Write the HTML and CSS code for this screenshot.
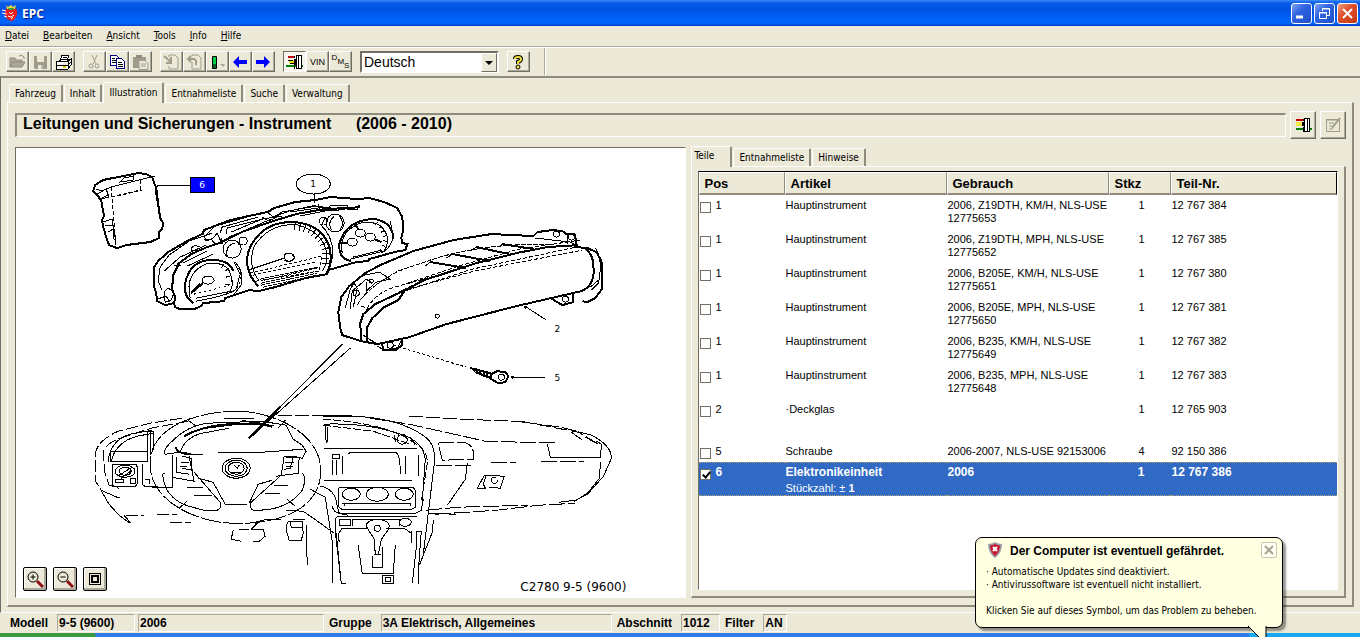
FILE: index.html
```html
<!DOCTYPE html>
<html lang="de">
<head>
    <meta charset="UTF-8">
    <meta name="viewport" content="width=device-width, initial-scale=1.0">
    <title>EPC</title>
    <link rel="stylesheet" href="styles.css">
</head>
<body>
    <header class="titlebar">
        <svg class="app-icon" width="17" height="18" viewBox="0 0 17 18">
            <path d="M3 6l3-2h6l3 2v5l-3 5-3 1-4-2-2-4z" fill="#e81c1c"/>
            <path d="M4 1l2 2 3-2 2 2 3-2-1 4H5z" fill="#e8d840"/>
            <path d="M6 4h6l-1 2H7z" fill="#30a030"/>
            <path d="M0 6l4 1M0 9l5 1M2 12l3 1M7 8l2 2 2-2M6 12l3 1 3-2M9 15l2-2" stroke="#fff" fill="none"/>
        </svg>
        <h1 class="app-name">EPC</h1>
        <div class="window-buttons">
            <button class="win-btn" aria-label="Minimieren"><svg width="19" height="19"><path d="M4 13h7" stroke="#fff" stroke-width="3"/></svg></button>
            <button class="win-btn" aria-label="Wiederherstellen"><svg width="19" height="19" fill="none" stroke="#fff"><path d="M7.500 7V4.500h7v7H12M7 5h8M4.500 8.500h7v6h-7zM4 9h8"/></svg></button>
            <button class="win-btn win-close" aria-label="Schließen"><svg width="19" height="19"><path d="M5 5l9 9M14 5l-9 9" stroke="#fff" stroke-width="2"/></svg></button>
        </div>
    </header>

    <nav class="menubar">
        <a href="#"><u>D</u>atei</a>
        <a href="#"><u>B</u>earbeiten</a>
        <a href="#"><u>A</u>nsicht</a>
        <a href="#"><u>T</u>ools</a>
        <a href="#"><u>I</u>nfo</a>
        <a href="#"><u>H</u>ilfe</a>
    </nav>

    <div class="toolbar">
        <div class="tool-group">
            <button class="tool" aria-label="Öffnen" disabled><svg width="19" height="18"><path d="M2 14V5h5l1 2h6v3M2 14l3-5h12l-3 5z" fill="#aca899" stroke="#8f8b7d"/><path d="M11 3q3-2 5 1v2" fill="none" stroke="#8f8b7d"/></svg></button>
            <button class="tool" aria-label="Speichern" disabled><svg width="19" height="18"><path d="M3 3h13v13H4l-1-1z" fill="#a09c8c"/><path d="M6 3h7v6H6zM7 12h5v4H7z" fill="#ece9d8"/><path d="M11 12v4" stroke="#8f8b7d"/></svg></button>
            <button class="tool" aria-label="Drucken"><svg width="19" height="18" shape-rendering="crispEdges"><path d="M6 8l2-6h7l-2 6M2 8h12l3-2v6l-3 4H2zM2 12h12l3-3M5 8l3-2h7M14 8v8" fill="#fff" stroke="#000"/><path d="M9 4h4M8 6h4" stroke="#000"/><path d="M9 14h3" stroke="#d8c800" stroke-width="2"/></svg></button>
        </div>
        <div class="tool-group">
            <button class="tool" aria-label="Ausschneiden" disabled><svg width="19" height="18" fill="none" stroke="#a09c8c"><path d="M7 2l4 9M12 2l-4 9"/><circle cx="6" cy="13" r="2"/><circle cx="12" cy="13" r="2"/></svg></button>
            <button class="tool" aria-label="Kopieren"><svg width="19" height="18" shape-rendering="crispEdges" fill="#fff" stroke="#000080"><path d="M2.500 2.500h6l3 3v7h-9z"/><path d="M8.500 5.500h5l3 3v7h-8z"/><path d="M4 5h3M4 7h4M4 9h4M10 9h4M10 11h5M10 13h5" stroke="#000"/></svg></button>
            <button class="tool" aria-label="Einfügen" disabled><svg width="19" height="18"><path d="M2 4h13v11H2z" fill="#a09c8c"/><path d="M5 2h6v3H5z" fill="#8f8b7d"/><path d="M8 7.500h6l3 3v6H8z" fill="#ece9d8" stroke="#a09c8c"/><path d="M10 11h5M10 13h5" stroke="#a09c8c"/></svg></button>
        </div>
        <div class="tool-group">
            <button class="tool" aria-label="Import" disabled><svg width="19" height="18" fill="none" stroke="#a09c8c"><path d="M7 4V2h6l3 3v11H7v-3"/><path d="M2 3l7 6M9 4v6H4" stroke-width="2"/></svg></button>
            <button class="tool" aria-label="Export" disabled><svg width="19" height="18" fill="none" stroke="#a09c8c"><path d="M7 3V2h6l3 3v11H7V9"/><path d="M3 6h6q3 1 2 6M6 3L3 6l3 3" stroke-width="2"/></svg></button>
            <button class="tool" aria-label="Markierung"><svg width="19" height="18"><path d="M4.500 3.500h4v12h-4z" fill="#00d040" stroke="#000"/><path d="M5 11h3v4H5z" fill="#0a6020"/><path d="M12 11h5l-2 3z" fill="#aca899"/></svg></button>
            <button class="tool" aria-label="Zurück"><svg width="19" height="18"><path d="M2 9l6-6v4h8v4H8v4z" fill="#0000ff"/></svg></button>
            <button class="tool" aria-label="Vorwärts"><svg width="19" height="18"><path d="M16 9l-6-6v4H2v4h8v4z" fill="#0000ff"/></svg></button>
        </div>
        <div class="tool-group">
            <button class="tool pressed" aria-label="Filter"><svg width="19" height="18" shape-rendering="crispEdges"><path d="M3 4h7" stroke="#c00000" stroke-width="2"/><path d="M4 8h6" stroke="#e8e000" stroke-width="3"/><path d="M1 13h17" stroke="#008000" stroke-width="2"/><path d="M3 7h5M5 10h5M9 3v2M9 11v5" stroke="#000"/><path d="M9 6h3v6H9z" /><path d="M11 2.500h5v13h-5z" fill="#fff" stroke="#000"/><path d="M13.500 3v13" stroke="#000"/></svg></button>
            <button class="tool tool-text">VIN</button>
            <button class="tool tool-text"><span class="dms">D<span class="dms-m">M</span><span class="dms-s">S</span></span></button>
        </div>
        <div class="language">
            <select class="language-select" aria-label="Sprache">
                <option>Deutsch</option>
            </select>
            <span class="language-arrow"></span>
        </div>
        <button class="tool" aria-label="Hilfe"><svg width="19" height="18" fill="none"><path d="M6 6q0-2 3-2t3 2q0 2-3 3v2" stroke="#000" stroke-width="4"/><path d="M6 6q0-2 3-2t3 2q0 2-3 3v2" stroke="#f0e040" stroke-width="2"/><circle cx="9" cy="14" r="2" fill="#f0e040" stroke="#000"/></svg></button>
        <span class="toolbar-end"></span>
    </div>

    <main class="workspace">
        <div class="tabs">
            <button class="tab">Fahrzeug</button>
            <button class="tab">Inhalt</button>
            <button class="tab active">Illustration</button>
            <button class="tab">Entnahmeliste</button>
            <button class="tab">Suche</button>
            <button class="tab">Verwaltung</button>
        </div>
        <section class="panel">
            <div class="heading-row">
                <h2 class="heading">Leitungen und Sicherungen - Instrument <span class="years">(2006 - 2010)</span></h2>
                <button class="big-tool" aria-label="Filter"><svg width="19" height="18" shape-rendering="crispEdges"><path d="M2 4h8" stroke="#c00000" stroke-width="2"/><path d="M2 8h8" stroke="#f0e840" stroke-width="4"/><path d="M2 13h16" stroke="#008000" stroke-width="2"/><path d="M8 6h2v4H8z"/><path d="M10.500 2.500h5v13h-5z" fill="#fff" stroke="#000"/><path d="M9 3v2M9 11v5M13.500 3v13" stroke="#000"/></svg></button>
                <button class="big-tool" aria-label="Notiz" disabled><svg width="19" height="18" fill="none" stroke="#a09c8c"><path d="M2.500 3.500h13v12h-13z" /><path d="M2 4h13M5 7h5M5 10h3M5 13h4"/><path d="M8 12l8-10" stroke-width="2"/></svg></button>
            </div>

            <div class="columns">
                <div class="illustration">
                    <svg class="drawing" viewBox="16 148 668 449" fill="none" stroke="#000" shape-rendering="crispEdges">
                        <!-- control unit -->
                        <g>
                            <path class="thick" d="M95 185l8-5 35-7 8 1 6 3 2 6 2 4 4 31 3 5-1 6-3 3v6l-9 4-24 3-9 3-8-3-3-8-3-11-1-6 2-4-3-16-5-6-3-3z"/>
                            <path d="M96 189l6 2 9-4 44-11M100 199l4-2 5-3M103 222l9-3 4 25M105 225l9 1M108 232l5-3 1 11M97 194l9-5 3 8-8 2zM120 182l4-4 9-2v4zM155 190l5 29M158 186l-3 1 5 31"/>
                            <path stroke-dasharray="4 2" d="M111 187l5 59M111 197l29-7 1-11M117 196l25-6"/>
                            <path d="M157 185h33"/>
                        </g>
                        <!-- instrument cluster -->
                        <g>
                            <path class="thick" d="M180 309l-5-2-1-4-9 2-8-4-1-8-2-6v-20l4-6 10-9 19-11 15-7 2-4 26-10 37-8 7-4 21-6 20-2 15-3 27 2 12-1 15 4 13 6 5 9 1 13-2 8 1 5 5 1-2 6-11 2-25 7-1 2-12 1-28 8-1 4-22 4-30 9-17 4-9-1-24 8-1 3-21 2-2 3-7 3z"/>
                            <path class="thick" d="M174 303l1-6-3-8 1-14 6-12 12-9 16-7 12-4 25-12 29-10 23-7 28-5 24-1 12-1"/>
                            <path d="M162 290l-4-9 2-14 9-12 20-14 23-8M164 271l16-14 26-12M207 234l8-8 32-9 24-6M220 233l2-6 36-10M226 234l1-6 36-9M267 212l6 5 16-6 27-6M272 218l10-6 34-6 20 3M318 204l2 7 9-1 1-5h17v4h10l2-4M231 232l31-13 20-3M229 237l42-18M183 263l24-12M187 266l26-12M191 248l4-3 7 3-3 3-8-1zM204 239h7l4 5 7-1-1-5M203 233l3 8 7-3 4-5 4 9M262 217l7 4 8-4"/>
                            <path d="M290 212l34-5 21 3M300 216l30-6 9 1M164 292l4-4 6 4-3 8-6 2zM157 299l9-3 4 6M174 265h7M178 262l-1 7"/>
                            <!-- left dial -->
                            <path class="thick" d="M193 303q-10-7-8-20 5-22 24-23 20-1 24 11"/>
                            <path d="M190 298q-6-26 18-35 18-1 22 10 5 13-1 19M196 301q34-6 40-12l4-15-6-12M235 262q9 9 6 23l-7 9M196 298l36-7" />
                            <path stroke-dasharray="2 3" d="M194 294q34-8 37-10 2-15-11-21M236 263q9 14 0 26"/>
                            <ellipse cx="208" cy="280" rx="6" ry="4"/>
                            <path class="heavy" d="M203 283l-12 10 9-9"/>
                            <path d="M226 277l4-1M225 271l4-3M221 268l3-4M225 284h5"/>
                            <circle cx="232" cy="249" r="9"/><path d="M227 256q-2-11 8-13"/>
                            <circle cx="243" cy="241" r="4"/><path d="M238 245l2-8"/>
                            <!-- center dial -->
                            <path class="thick" d="M258 286q-17-18-8-39 13-26 44-25 27 2 35 24 4 17-3 28"/>
                            <path d="M259 281q-12-16-5-35 16-24 44-21 24 7 28 26 2 12-4 20M320 224q18 18 10 42M251 278q-8-16-1-31"/>
                            <path stroke-width="7" stroke-dasharray="1 4" d="M294 226q26 4 31 23v17"/>
                            <path d="M248 270l36-12v-4l7-1 4 5-6 4-5-2"/>
                            <ellipse cx="289" cy="257" rx="5" ry="4"/>
                            <path stroke-dasharray="3 2" d="M250 273l72-17-3 15-63 10M253 275l63-13"/>
                            <path stroke-dasharray="4 1" d="M261 283l56-12M261 285l56-12M263 287l54-12M264 280l53-12M260 279l58-12"/>
                            <circle cx="335" cy="223" r="9"/><path d="M331 230q-4-8 3-14M339 216q6 6 1 14"/>
                            <circle cx="323" cy="221" r="4"/><path d="M321 225l4-7"/>
                            <!-- right dial -->
                            <path class="thick" d="M351 261q-13-2-12-17 7-25 36-25 18 4 18 20"/>
                            <path d="M342 253q-4-21 18-30 22-4 27 14 1 12-6 16M350 259l34-8q7-4 9-15l-3-15M353 257l29-7"/>
                            <ellipse cx="352" cy="242" rx="5" ry="4"/><ellipse cx="360" cy="233" rx="5" ry="4"/><ellipse cx="370" cy="237" rx="5" ry="4"/>
                            <path class="heavy" d="M348 243h-9M358 229l-4-6M374 239l7 3"/>
                            <path stroke-width="4" stroke-dasharray="1 4" d="M376 223q14 13 5 27"/>
                            <ellipse cx="313" cy="184" rx="17" ry="10"/>
                            <path d="M314 194v9"/>
                        </g>
                        <!-- housing with lens -->
                        <g>
                            <path class="thick" d="M377 344l-16-3-19-6-2-7-2-16 3-15 8-11 16-13 15-8 33-14 40-11 38-6 42 2 4-4 15-2 10 1 4 3 8 0 2 8-1 5 12 1 9 4 5 9 1 12v15l-7 10-8 4-5-1"/>
                            <path class="thick" d="M361 341l-1-18 3-9 12-10 32-15 17-9 52-17 40-10 31-6 31-2"/>
                            <path class="thick" d="M367 342v-15l5-9 12-11 14-7 8-12M377 344l32-7 37-13 70-18 65-15q14-6 12-24 0-13-9-20"/>
                            <path d="M595 248q8 12 3 35l-7 7M590 287l8-7"/>
                            <path stroke-dasharray="4 2" d="M408 283l50-17 61-17 61-9M411 288l63-17 108-21M407 290l65-21 104-22M361 306l6 2q8-14 24-20l43-12 40-12"/>
                            <path stroke-dasharray="5 1" d="M357 305q8-16 41-34l32-11q51-17 124-16M366 310l13-8 47-24"/>
                            <path class="heavy" d="M430 262l36 6M452 254l38 7M476 247l33 7M502 244l32 5"/>
                            <path d="M430 262l-5 4M452 254l-6 4M476 247l-6 4M502 244l-4 3M377 346l7 4 16-3 3-9M383 346v4l13 0 6-12"/>
                            <path class="heavy" d="M382 344l1 6 13-1 6-4v-7M550 298l12 7 11-3v-9"/>
                            <path d="M345 308l5-19 4-6 3 5-4 19M350 309l2-18 14-12 6 4M364 275l15-3 11 7-14 3-10 9v-9"/>
                            <circle cx="356" cy="293" r="3"/><circle cx="371" cy="281" r="2"/><circle cx="556" cy="234" r="3"/><circle cx="571" cy="237" r="3"/><circle cx="390" cy="345" r="3"/><circle cx="565" cy="299" r="3"/><circle cx="437" cy="316" r="2"/>
                            <path d="M371 340l6 4M363 335l12 8M535 238l35 4 8 4M567 235v9"/>
                            <circle cx="525" cy="307" r="1" fill="#000"/>
                            <path d="M526 307l20 13"/>
                        </g>
                        <!-- screw -->
                        <path stroke-dasharray="3 2" d="M393 345l73 22"/>
                        <path class="heavy" d="M470 367l5 4M475 368l2 5M479 369l1 6M483 371l1 6M487 372v6M470 368l20 5M475 372l16 6"/>
                        <path class="heavy" d="M491 374l6-3 8 1 3 4-3 6-7 1-7-4z"/>
                        <circle cx="501" cy="377" r="3"/>
                        <circle cx="512" cy="377" r="1" fill="#000"/>
                        <path d="M513 377h32"/>
                        <!-- pointer to dashboard -->
                        <path d="M342 344l-93 94M350 348l-101 90"/>
                        <path class="thick" d="M280 407l-31 31 28-26"/>
                        <!-- dashboard outline -->
                        <g>
                            <path stroke-dasharray="12 3" d="M182 418l-32 5-32 8q-22 10-23 24v25l6 10M188 421l-37 7-28 9q-21 7-20 18l2 18 4 12 10 3M126 515h18M157 514h20M170 522h21"/>
                            <path stroke-dasharray="14 3" d="M278 415h52l22 1M409 416l51 3 56 2 45 6 30 8M520 421l58 11 20 12"/>
                            <path d="M591 435q20 10 20 23l-8 18-16 18-12 6-16 2M573 502l15-10 11-14 1-16"/>
                            <path d="M101 490l8 14 10 11 11 8M124 515l7 8M101 490l16 7h3"/>
                            <path d="M108 462q2-22 22-28l22-4M111 462q4-20 26-26l16-3M147 431v27M150 431v24M153 431v19M110 451h37v10h-37zM147 431h6v18M114 464h21q2 0 2 3v16q0 3-3 3h-19q-3 0-3-3v-16q0-3 2-3M142 464v18q0 4 4 4h12M172 474v13h-20M145 479h4v5"/>
                            <ellipse cx="125" cy="471" rx="10" ry="6"/><ellipse cx="125" cy="471" rx="6" ry="4"/>
                            <path d="M119 475l13-8M121 478l11-8M115 479h8v3h-8zM130 478h5v5h-5z"/>
                        </g>
                        <!-- steering wheel -->
                        <g>
                            <path stroke-dasharray="20 2" d="M243 411c-45-1-87 15-92 44-7 34 25 60 69 67 46 5 94-7 100-44 6-37-33-63-78-67"/>
                            <path d="M188 420l8 6M285 420l-7 8M179 508l8-7M295 506l-8-7"/>
                            <path d="M165 454q-3-4 7-13 16-16 36-18l53-2 25 4 7 14 9 6 4 6-4 7-14-2M165 454l15-2 5 2h18"/>
                            <path class="heavy" d="M184 436q17-10 44-12l30-1 14 3M175 447l4 5 12 2"/>
                            <path d="M180 452q5-15 22-19l27-5M218 452h44M262 452l41-3M224 418h30M242 420l30 7M187 434l12-5 39-5 36 1"/>
                            <path d="M172 455v22l22 4-5-25M176 457v15l13 2M182 456l9 2 1 12-10-2M276 476l22-3 1-16M281 475l3-19 16 1M286 457h7l-3 11-6 1"/>
                            <ellipse cx="236" cy="468" rx="14" ry="10"/><ellipse cx="236" cy="468" rx="11" ry="8"/><ellipse cx="236" cy="468" rx="8" ry="6"/>
                            <path d="M231 472h10M234 465l3 3 2-3M181 462h8M180 466h7M285 462h9M286 466h7"/>
                            <path d="M165 473q-5-2 1 15 8 15 27 19 14 5 24 3 5-2 3-8l-26-30M198 478l15 4 12 22h22M249 503l9-19 14-4M302 473q5 4 0 17-15 21-49 20-5-3-2-8l31-28"/>
                            <path d="M187 487h16M194 495h18M274 485h14M265 493h15"/>
                            <path d="M251 529l8-8 8-2h14M233 530l-2 9 10 2M252 529h11l2 7-6 5h-6M239 529h10M257 521l-5 8M290 521l1 6h12M287 522l-1 8 3 10h12l2-7-1-12h-14M293 519h12M306 525l1 40M286 510l17 1 13 9 18 13"/>
                            <path d="M320 486q15 2 17 20l2 7 9 2M310 489l15 8 5 32 2 12v42M335 531l6 52"/>
                        </g>
                        <!-- center console -->
                        <g>
                            <path class="heavy" d="M323 416h29"/>
                            <path d="M324 448h93M324 480h88M327 427v15M325 426l1 17M324 424q48-2 84 13 15 7 17 22l-3 42M351 416q46 1 73 20 12 8 10 27l-11 91"/>
                            <path stroke-dasharray="8 2" d="M323 419q63 4 90 23 15 8 14 21l-6 38M323 425l50 6 37 13"/>
                            <path d="M350 452h45q5 1 5 22M405 456v18M418 455v21M342 456v18M332 454h7v4h-7zM332 460v15M336 460v15M350 452l-2 2"/>
                            <path d="M339 487h73q3 1 3 4v16l-4 2h-69q-4-1-4-5v-14zM342 503h69M344 503v3M410 503v3"/>
                            <ellipse cx="351" cy="494" rx="9" ry="6"/><ellipse cx="377" cy="494" rx="11" ry="7"/><ellipse cx="404" cy="494" rx="9" ry="6"/>
                            <path d="M332 506q2 8 10 7h73l6-3 2-11M337 516h80M335 526v-6q0-3 4-4M335 526l2 17 4 40h5M339 519h11v6h-11zM352 526v-7h47v7M412 583l4-36v-16h5l-3 40v13M411 531v12M339 542l-1-8 4-6h26M386 528h18l7 5"/>
                            <ellipse cx="405" cy="522" rx="6" ry="4"/>
                            <path d="M366 526q0-6 11-7 11 1 12 6 0 4-5 10-4 5-4 9l-2 10M366 526l8 13 1 15h5M372 556v11h10v-20M374 554h7"/>
                            <circle cx="377" cy="528" r="3"/>
                            <path d="M358 545l4 28h31l2-28M382 575h11v8h-11zM385 577h5v4h-5zM433 520l-1 12-13 33"/>
                            <circle cx="402" cy="439" r="5"/><path d="M394 435l1 7M410 437l5 8"/>
                        </g>
                        <!-- passenger side -->
                        <g stroke-dasharray="16 3">
                            <path d="M370 418l39 6 76 17 38 1h34M438 444q0-2 5-2h20q9 2 10 10v7l-31 1zM436 465h35M491 462h25M541 461h43M435 514l61-4 42-5 37-2M426 510l31-3 71-2M428 513l28 1"/>
                            <path stroke-dasharray="none" d="M547 444l3 13h50l1-13-5-3M571 432l11 8M585 437l13 7M467 463l-2 16-18 26"/>
                            <path stroke-dasharray="none" d="M484 475l20 1-4 12-11-1M484 475l-7 13h8l-2-4 3-9"/>
                            <circle cx="494" cy="480" r="3"/>
                        </g>
                        <!-- callouts -->
                        <rect x="190" y="177" width="24" height="15" fill="#0000ff"/>
                        <g class="callouts" stroke="none" text-anchor="middle">
                            <text x="202" y="188" fill="#fff">6</text>
                            <text x="313" y="187" fill="#000">1</text>
                            <text x="557" y="332" fill="#000">2</text>
                            <text x="557" y="381" fill="#000">5</text>
                        </g>
                        <text class="plate" x="520" y="591">C2780 9-5 (9600)</text>
                    </svg>
                    <div class="zoom-buttons">
                        <button class="zoom-btn" aria-label="Vergrößern"><svg width="18" height="18" fill="none" stroke="#000"><circle cx="7" cy="7" r="5"/><path d="M4.500 7h5M7 4.500v5"/><path d="M11 11l6 6" stroke="#901010" stroke-width="3"/></svg></button>
                        <button class="zoom-btn" aria-label="Verkleinern"><svg width="18" height="18" fill="none" stroke="#000"><circle cx="7" cy="7" r="5"/><path d="M4.500 7h5"/><path d="M11 11l6 6" stroke="#901010" stroke-width="3"/></svg></button>
                        <button class="zoom-btn" aria-label="Einpassen"><svg width="18" height="18" fill="none" stroke="#000" shape-rendering="crispEdges"><path d="M3.500 3.500h11v11h-11z"/><path d="M6 6h6v6H6z" stroke-width="2"/></svg></button>
                    </div>
                </div>

                <div class="parts">
                    <div class="tabs parts-tabs">
                        <button class="tab active">Teile</button>
                        <button class="tab">Entnahmeliste</button>
                        <button class="tab">Hinweise</button>
                    </div>
                    <div class="parts-panel">
                        <div class="list">
                            <table class="parts-table">
                                <colgroup>
                                    <col class="col-pos"><col class="col-name"><col class="col-name"><col class="col-qty"><col>
                                </colgroup>
                                <thead>
                                    <tr><th>Pos</th><th>Artikel</th><th>Gebrauch</th><th>Stkz</th><th>Teil-Nr.</th></tr>
                                </thead>
                                <tbody>
                                    <tr><td><label><input type="checkbox">1</label></td><td>Hauptinstrument</td><td>2006, Z19DTH, KM/H, NLS-USE<br>12775653</td><td>1</td><td>12 767 384</td></tr>
                                    <tr><td><label><input type="checkbox">1</label></td><td>Hauptinstrument</td><td>2006, Z19DTH, MPH, NLS-USE<br>12775652</td><td>1</td><td>12 767 385</td></tr>
                                    <tr><td><label><input type="checkbox">1</label></td><td>Hauptinstrument</td><td>2006, B205E, KM/H, NLS-USE<br>12775651</td><td>1</td><td>12 767 380</td></tr>
                                    <tr><td><label><input type="checkbox">1</label></td><td>Hauptinstrument</td><td>2006, B205E, MPH, NLS-USE<br>12775650</td><td>1</td><td>12 767 381</td></tr>
                                    <tr><td><label><input type="checkbox">1</label></td><td>Hauptinstrument</td><td>2006, B235, KM/H, NLS-USE<br>12775649</td><td>1</td><td>12 767 382</td></tr>
                                    <tr><td><label><input type="checkbox">1</label></td><td>Hauptinstrument</td><td>2006, B235, MPH, NLS-USE<br>12775648</td><td>1</td><td>12 767 383</td></tr>
                                    <tr class="row-tall"><td><label><input type="checkbox">2</label></td><td>·Deckglas</td><td></td><td>1</td><td>12 765 903</td></tr>
                                    <tr class="row-short"><td><label><input type="checkbox">5</label></td><td>Schraube</td><td>2006-2007, NLS-USE 92153006</td><td>4</td><td>92 150 386</td></tr>
                                    <tr class="selected"><td><label><input type="checkbox" checked>6</label></td><td>Elektronikeinheit<span class="qty-note">Stückzahl: ± <b>1</b></span></td><td>2006</td><td>1</td><td>12 767 386</td></tr>
                                </tbody>
                            </table>
                        </div>
                    </div>
                </div>
            </div>
        </section>
    </main>

    <footer class="statusbar">
        <span class="status-label">Modell</span>
        <span class="cell cell-model">9-5 (9600)</span>
        <span class="cell cell-year">2006</span>
        <span class="status-label">Gruppe</span>
        <span class="cell cell-group">3A Elektrisch, Allgemeines</span>
        <span class="status-label">Abschnitt</span>
        <span class="cell cell-section">1012</span>
        <span class="status-label">Filter</span>
        <span class="cell cell-filter">AN</span>
    </footer>
    <div class="taskbar">
        <span class="start"></span>
        <span class="tray"></span>
    </div>

    <aside class="balloon">
        <div class="balloon-head">
            <svg width="14" height="16" viewBox="0 0 14 16"><path d="M7 0q3 2 7 2 0 9-7 14Q0 11 0 2q4 0 7-2z" fill="#9a9aa8"/><path d="M7 2q2 1 5 1.500 0 6-5 10.500-5-4.500-5-10.500Q5 3 7 2z" fill="#c81830"/><path d="M5 5l4 4M9 5l-4 4" stroke="#fff" stroke-width="2"/></svg>
            <h3 class="balloon-title">Der Computer ist eventuell gefährdet.</h3>
            <button class="balloon-close" aria-label="Schließen"><svg width="14" height="14"><path d="M3 3l8 8M11 3l-8 8" stroke="#a8a490" stroke-width="2"/></svg></button>
        </div>
        <ul class="balloon-list">
            <li>Automatische Updates sind deaktiviert.</li>
            <li>Antivirussoftware ist eventuell nicht installiert.</li>
        </ul>
        <p class="balloon-text">Klicken Sie auf dieses Symbol, um das Problem zu beheben.</p>
        <svg class="balloon-tail" width="24" height="11"><path d="M0 0l12 12h6V0z" fill="#ffffe1"/><path d="M0 0l12 12M18 0v12" stroke="#000" fill="none"/></svg>
    </aside>
</body>
</html>
```

FILE: styles.css
```css
* {
    box-sizing: border-box;
}
body {
    font-family: "DejaVu Sans Condensed", Tahoma, sans-serif;
    font-size: 10px;
    line-height: 13px;
    margin: 0;
    min-height: 100vh;
    display: flex;
    flex-direction: column;
    position: relative;
    overflow: hidden;
    background-color: #ece9d8;
    color: #000;
}
button {
    font-family: inherit;
    font-size: 10px;
    color: #000;
    padding: 0;
    margin: 0;
    display: flex;
    align-items: center;
    justify-content: center;
}
h1, h2, h3, p, ul {
    margin: 0;
    padding: 0;
}

/* title bar */
.titlebar {
    height: 26px;
    display: flex;
    align-items: center;
    padding: 0 2px;
    gap: 3px;
    background: linear-gradient(#3c8cf8 0, #0a5ae8 3px, #0054e3 10px, #0060fa 18px, #0066ff 23px, #0040c0 26px);
}
.app-name {
    font-family: "Open Sans", sans-serif;
    font-size: 12px;
    font-weight: bold;
    color: white;
    text-shadow: 1px 1px 1px #0a1883;
}
.window-buttons {
    display: flex;
    gap: 2px;
    margin-left: auto;
}
.win-btn {
    width: 21px;
    height: 21px;
    border: 1px solid white;
    border-radius: 3px;
    background: linear-gradient(135deg, #7fa4f4, #2f63e0 40%, #1f4fc8);
}
.win-close {
    background: linear-gradient(135deg, #f0a080, #e0502c 40%, #c03810);
}

/* menu and toolbar */
.menubar {
    height: 21px;
    display: flex;
    align-items: center;
    gap: 14px;
    padding: 0 5px 2px;
    border-bottom: 1px solid #aca899;
}
.menubar a {
    color: #000;
    text-decoration: none;
}
.toolbar {
    height: 29px;
    display: flex;
    align-items: center;
    gap: 8px;
    padding: 0 0 1px 6px;
    border-top: 1px solid white;
}
.tool-group {
    display: flex;
}
.tool {
    width: 23px;
    height: 21px;
    background: #ece9d8;
    border: 1px solid;
    border-color: #fff #716f64 #716f64 #fff;
    box-shadow: inset -1px -1px #aca899;
}
.tool.pressed {
    background: #f6f4ec;
    border-color: #716f64 #fff #fff #716f64;
    box-shadow: none;
}
.tool-text {
    font-family: "Liberation Sans", Arial, sans-serif;
    font-size: 9px;
}
.dms {
    display: flex;
    align-items: flex-start;
    height: 18px;
    font-size: 8px;
    line-height: 9px;
}
.dms-m {
    margin-top: 4px;
}
.dms-s {
    margin-top: 8px;
}
.language {
    position: relative;
    width: 139px;
}
.language-select {
    appearance: none;
    display: block;
    width: 100%;
    height: 22px;
    padding: 0 2px;
    font-family: "Liberation Sans", Arial, sans-serif;
    font-size: 14px;
    color: #000;
    background: white;
    border: 2px solid;
    border-color: #716f64 #fff #fff #716f64;
    border-radius: 0;
}
.language-arrow {
    position: absolute;
    top: 2px;
    right: 2px;
    width: 16px;
    height: 19px;
    background: #ece9d8;
    border: 1px solid;
    border-color: #fff #716f64 #716f64 #fff;
    pointer-events: none;
}
.language-arrow::after {
    content: "";
    position: absolute;
    left: 3px;
    top: 7px;
    border: 4px solid transparent;
    border-top-color: #000;
    border-bottom: 0;
}
.toolbar-end {
    align-self: stretch;
    margin-left: 6px;
    border-left: 1px solid #aca899;
    border-right: 1px solid white;
}

/* workspace */
.workspace {
    flex: 1;
    display: flex;
    flex-direction: column;
    padding: 4px 6px 5px;
    border-top: 2px solid #8f8b7d;
    border-left: 1px solid #716f64;
    border-bottom: 1px solid white;
}
.tabs {
    display: flex;
    align-items: flex-end;
    height: 20px;
    padding-left: 2px;
    gap: 1px;
}
.tab {
    height: 18px;
    padding: 0 5px;
    background: #ece9d8;
    border: 1px solid white;
    border-right: 2px solid #8f8b7d;
    border-bottom: 0;
    border-radius: 2px 2px 0 0;
}
.tab.active {
    height: 21px;
    padding-bottom: 2px;
    margin-bottom: -1px;
    position: relative;
}
.panel {
    flex: 1;
    display: flex;
    flex-direction: column;
    padding: 8px 6px 7px 7px;
    border: 1px solid white;
    border-right: 2px solid #8f8b7d;
    border-bottom: 2px solid #8f8b7d;
}
.heading-row {
    display: flex;
    align-items: center;
    gap: 4px;
    margin-bottom: 8px;
}
.heading {
    flex: 1;
    height: 24px;
    padding: 0 6px;
    font-family: "Liberation Sans", Arial, sans-serif;
    font-size: 16px;
    line-height: 18px;
    border: 2px solid;
    border-color: #8f8b7d #fff #fff #8f8b7d;
    border-right-width: 1px;
    border-bottom-width: 1px;
}
.years {
    margin-left: 20px;
}
.big-tool {
    width: 26px;
    height: 28px;
    background: #ece9d8;
    border: 1px solid;
    border-color: #fff #716f64 #716f64 #fff;
    box-shadow: inset -1px -1px #aca899;
}
.columns {
    flex: 1;
    display: grid;
    grid-template-columns: 670fr 655fr;
    gap: 5px;
}
.illustration {
    position: relative;
    background: white;
    border: 1px solid;
    border-color: #716f64 #fff #fff #716f64;
}
.drawing {
    display: block;
    width: 100%;
}
.thick,
.heavy {
    stroke-width: 2;
}
.callouts {
    font-family: "DejaVu Sans", sans-serif;
    font-size: 9px;
}
.plate {
    font-family: "DejaVu Sans", sans-serif;
    font-size: 12px;
    fill: #000;
    stroke: none;
}
.zoom-buttons {
    position: absolute;
    left: 7px;
    bottom: 6px;
    display: flex;
    gap: 6px;
}
.zoom-btn {
    width: 24px;
    height: 24px;
    background: #ece9d8;
    border: 1px solid #000;
    border-radius: 2px;
    box-shadow: inset -2px -2px #aca899, inset 1px 1px #fff;
}

/* parts list */
.parts {
    display: flex;
    flex-direction: column;
}
.parts-tabs {
    height: 19px;
    padding-left: 0;
}
.parts-tabs .active {
    padding: 0 16px 4px 3px;
}
.parts-panel {
    flex: 1;
    display: flex;
    padding: 4px 6px 6px;
    border: 1px solid white;
    border-right: 2px solid #8f8b7d;
    border-bottom: 2px solid #8f8b7d;
}
.list {
    flex: 1;
    background: white;
    border: 1px solid;
    border-color: #000 #fff #fff #716f64;
}
.parts-table {
    width: 100%;
    table-layout: fixed;
    border-collapse: separate;
    border-spacing: 0;
    font-family: "Liberation Sans", Arial, sans-serif;
    font-size: 11px;
}
.col-pos {
    width: 86px;
}
.col-name {
    width: 162px;
}
.col-qty {
    width: 62px;
}
th {
    height: 23px;
    padding: 0 5px;
    text-align: left;
    font-size: 13px;
    background: #ece9d8;
    border: 1px solid;
    border-color: #fff #8f8b7d #8f8b7d #fff;
    border-bottom-width: 2px;
}
th:last-child {
    border-right-color: #000;
}
td {
    height: 34px;
    padding: 4px 1px 0;
    vertical-align: top;
    white-space: nowrap;
}
td:nth-child(4) {
    text-align: right;
    padding-right: 26px;
}
.row-tall td {
    height: 42px;
}
.row-short td {
    height: 21px;
}
td label {
    display: flex;
    gap: 5px;
}
td input {
    appearance: none;
    position: relative;
    width: 11px;
    height: 11px;
    margin: 3px 0 0;
    background: white;
    border: 1px solid #716f64;
}
td input:checked::after {
    content: "";
    position: absolute;
    left: 3px;
    top: 0;
    width: 3px;
    height: 6px;
    border: solid #000;
    border-width: 0 2px 2px 0;
    transform: rotate(40deg);
}
.selected td {
    background: #316ac5;
    color: white;
    font-size: 12px;
    font-weight: bold;
    border: dotted #b0a070;
    border-width: 1px 0;
    padding-top: 3px;
}
.qty-note {
    display: block;
    margin-top: 3px;
    font-size: 11px;
    font-weight: normal;
}

/* status bar and task bar */
.statusbar {
    height: 20px;
    display: flex;
    align-items: center;
    gap: 3px;
    padding-left: 8px;
    font-family: "Liberation Sans", Arial, sans-serif;
    font-size: 12px;
    font-weight: bold;
}
.status-label {
    padding: 0 6px 0 2px;
}
.cell {
    height: 18px;
    padding: 2px 1px;
    white-space: nowrap;
    border: 1px solid;
    border-color: #aca899 #fff #fff #aca899;
}
.cell-model {
    width: 78px;
}
.cell-year {
    width: 186px;
}
.cell-group {
    width: 231px;
}
.cell-section {
    width: 39px;
}
.cell-filter {
    width: 24px;
}
.taskbar {
    height: 4px;
    display: flex;
    justify-content: space-between;
    background: #2f7ae8;
}
.start {
    width: 96px;
    background: #3c9a3c;
    border-radius: 0 4px 0 0;
}
.tray {
    width: 111px;
    background: #18a8f0;
}

/* security balloon */
.balloon {
    position: absolute;
    right: 77px;
    bottom: 9px;
    width: 308px;
    height: 91px;
    padding: 4px 5px 0 10px;
    background: #ffffe1;
    border: 1px solid #000;
    border-radius: 7px;
    box-shadow: 3px 3px 2px rgba(0, 0, 0, 0.4);
}
.balloon-head {
    display: flex;
    align-items: flex-start;
    gap: 8px;
    padding-left: 2px;
    height: 23px;
}
.balloon-title {
    font-family: "Liberation Sans", Arial, sans-serif;
    font-size: 12px;
    line-height: 19px;
}
.balloon-close {
    width: 16px;
    height: 16px;
    margin-left: auto;
    background: #fffff4;
    border: 1px solid #c8c4b0;
    border-radius: 2px;
}
.balloon-list {
    list-style: none;
}
.balloon-list li::before {
    content: "· ";
}
.balloon-text {
    margin-top: 13px;
    white-space: nowrap;
}
.balloon-tail {
    position: absolute;
    right: 10px;
    top: 88px;
}
```
